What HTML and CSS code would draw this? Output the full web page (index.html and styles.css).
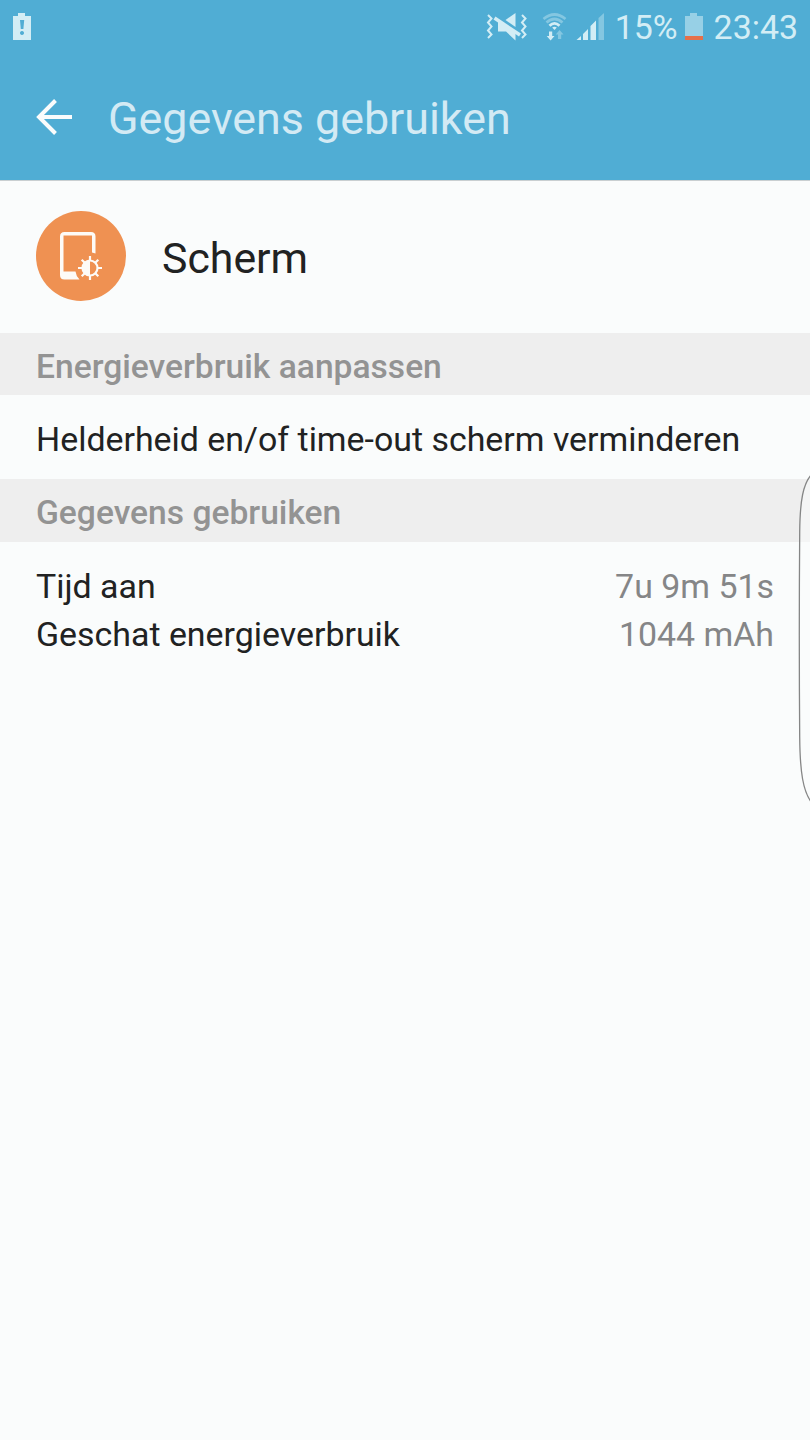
FILE: index.html
```html
<!DOCTYPE html>
<html lang="nl">
<head>
    <meta charset="UTF-8">
    <meta name="viewport" content="width=device-width, initial-scale=1.0">
    <title>Gegevens gebruiken</title>
    <link rel="stylesheet" href="styles.css">
</head>
<body>
    <header class="top">
        <div class="status-bar">
            <svg class="alert-icon" width="20" height="28" viewBox="0 0 20 28">
                <path fill="#d3edf5" fill-rule="evenodd" d="M6 0h7v3h6v24H1V3h5zM8 7l.8 9h2.6l.8-9zM10 18a2 2 0 1 0 .01 0z"/>
            </svg>
            <div class="status-right">
                <svg class="mute-icon" width="42" height="28" viewBox="0 0 42 28">
                    <g fill="none" stroke="#d3edf5" stroke-width="2">
                        <path d="M2 2l3.500 3.500-3.500 4 3.500 4-3.500 4 3.500 4-3.500 3.500M36 2l3.500 3.500-3.500 4 3.500 4-3.500 4 3.500 4-3.500 3.500"/>
                    </g>
                    <path fill="#d3edf5" d="M19.500 7L29.500 0V14zM12 8L29.500 19.500V27.500L20 18.500H12z"/>
                    <path fill="none" stroke="#d3edf5" stroke-width="3.500" d="M8.500 5L34 22"/>
                </svg>
                <svg class="wifi-icon" width="26" height="30" viewBox="0 0 26 30">
                    <g fill="none" stroke="#d3edf5" stroke-width="2.800">
                        <path opacity=".4" d="M1.500 6Q12.500-3 23.500 6"/>
                        <path opacity=".4" d="M4.500 9.500Q12.500 2.500 20.500 9.500"/>
                        <path d="M7.500 12.700Q12.500 8 17.500 12.700"/>
                    </g>
                    <path fill="#d3edf5" d="M10.200 14.500Q12.500 12.800 14.800 14.500L12.500 17z"/>
                    <path fill="#d3edf5" d="M7 18.500h3.200v4.500h2.300L8.600 27.500 4.700 23H7z"/>
                    <path fill="#d3edf5" opacity=".4" d="M16 26h3.200v-4.500h2.300L17.600 17l-3.900 4.500H16z"/>
                </svg>
                <svg class="signal-icon" width="30" height="28" viewBox="0 0 30 28">
                    <path fill="#d3edf5" d="M.5 27L5 23v4zM7 21l5-5v11H7zM14.500 13l5.500-5.500V27h-5.500z"/>
                    <path fill="#d3edf5" opacity=".4" d="M22.500 5L28 0v27h-5.500z"/>
                </svg>
                <span class="percent">15%</span>
                <svg class="battery-icon" width="20" height="28" viewBox="0 0 20 28">
                    <path fill="#97d0e6" d="M6 0h7v3h6v20H1V3h5z"/>
                    <path fill="#e5704a" d="M1 23h18v4H1z"/>
                </svg>
                <span class="clock">23:43</span>
            </div>
        </div>
        <div class="toolbar">
            <svg class="back-icon" width="38" height="38" viewBox="0 0 38 38">
                <path fill="none" stroke="#fafcfc" stroke-width="4" d="M36 19H4M19.500 2.500L3 19l16.500 16.500"/>
            </svg>
            <h1>Gegevens gebruiken</h1>
        </div>
    </header>

    <main>
        <div class="app">
            <svg class="app-icon" width="90" height="90" viewBox="0 0 90 90">
                <circle cx="45" cy="45" r="45" fill="#ef9152"/>
                <path fill="#fdfbf8" fill-rule="evenodd" d="M28.500 21H55q4.500 0 4.500 4.500V42.500L56 41.500V24.500H27.500V60.500H39.500Q40 65 43.500 68.500H28.500q-4.500 0-4.500-4.500V25.500q0-4.500 4.500-4.500z"/>
                <g transform="translate(54 57)" stroke="#fdfbf8" stroke-width="2.200" fill="none">
                    <circle r="7.500"/>
                    <path fill="#fdfbf8" stroke="none" d="M0-7.500a7.500 7.500 0 0 0 0 15z"/>
                    <path d="M0-8v-4M0 8v4M-8 0h-4M8 0h4M-5.500-5.500l-2.800-2.800M5.500-5.500l2.800-2.800M-5.500 5.500l-2.800 2.800M5.500 5.500l2.800 2.800"/>
                </g>
            </svg>
            <span class="app-name">Scherm</span>
        </div>

        <h2>Energieverbruik aanpassen</h2>
        <div class="option">Helderheid en/of time-out scherm verminderen</div>

        <h2 class="usage-title">Gegevens gebruiken</h2>
        <div class="details">
            <div class="row">
                <span>Tijd aan</span>
                <span class="value">7u 9m 51s</span>
            </div>
            <div class="row">
                <span>Geschat energieverbruik</span>
                <span class="value">1044 mAh</span>
            </div>
        </div>
    </main>

    <!-- edge panel handle -->
    <svg class="edge-handle" width="12" height="330" viewBox="0 0 12 330">
        <path fill="#fafcfc" fill-opacity=".5" stroke="#858686" stroke-width="1.300" d="M14 2C5 11 2 29 1.700 60Q.9 165 1.700 265C2 300 5 320 14 331"/>
    </svg>
</body>
</html>
```

FILE: styles.css
```css
* {
    box-sizing: border-box;
}
body {
    margin: 0;
    min-height: 1440px;
    background: #fafcfc;
    color: #212222;
    font-family: Roboto, sans-serif;
    font-size: 33.9px;
    overflow: hidden;
}
h1, h2 {
    margin: 0;
}
.top {
    height: 181px;
    background: #50add4;
    border-bottom: 1px solid #c9cfd1;
}
.status-bar {
    display: flex;
    justify-content: space-between;
    height: 54px;
    padding: 13px 12px 0;
    color: #d3edf5;
}
.status-right {
    display: flex;
    line-height: 30px;
}
.wifi-icon {
    margin-left: 14px;
}
.signal-icon {
    margin-left: 8px;
}
.percent {
    margin-left: 9px;
}
.battery-icon {
    margin-left: 6px;
}
.clock {
    margin-left: 10px;
}
.toolbar {
    display: flex;
    align-items: center;
    height: 126px;
    padding-left: 36px;
}
h1 {
    margin-left: 34px;
    padding-top: 2px;
    color: #d3eaf4;
    font-size: 44.8px;
    font-weight: 400;
}
.app {
    display: flex;
    align-items: center;
    height: 152px;
    padding: 0 36px 2px;
}
.app-name {
    margin-left: 36px;
    padding-top: 3px;
    font-size: 42.8px;
}
h2 {
    height: 62px;
    padding: 2px 36px 0;
    background: #eee;
    color: #939393;
    font-size: 33.6px;
    font-weight: 500;
    line-height: 63px;
}
.option {
    height: 84px;
    padding: 0 36px;
    line-height: 90px;
}
.usage-title {
    height: 63px;
}
.details {
    padding: 21px 36px;
}
.row {
    display: flex;
    justify-content: space-between;
    line-height: 48px;
}
.value {
    color: #858687;
}
.edge-handle {
    position: absolute;
    top: 472px;
    right: 0;
}
```
